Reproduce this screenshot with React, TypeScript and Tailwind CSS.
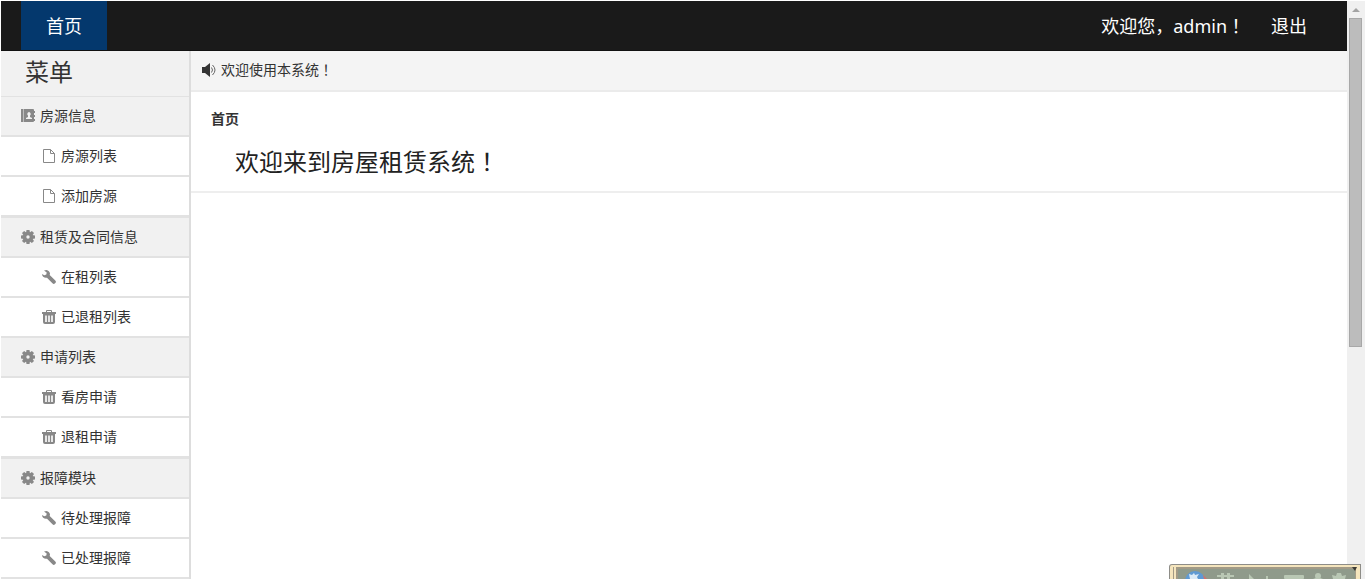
import React from 'react';

type IconName = 'book' | 'file' | 'gear' | 'wrench' | 'trash';

interface MenuItem {
    label: string;
    icon: IconName;
}

interface MenuGroup extends MenuItem {
    children: MenuItem[];
}

const MENU: MenuGroup[] = [
    {
        label: '房源信息',
        icon: 'book',
        children: [
            { label: '房源列表', icon: 'file' },
            { label: '添加房源', icon: 'file' }
        ]
    },
    {
        label: '租赁及合同信息',
        icon: 'gear',
        children: [
            { label: '在租列表', icon: 'wrench' },
            { label: '已退租列表', icon: 'trash' }
        ]
    },
    {
        label: '申请列表',
        icon: 'gear',
        children: [
            { label: '看房申请', icon: 'trash' },
            { label: '退租申请', icon: 'trash' }
        ]
    },
    {
        label: '报障模块',
        icon: 'gear',
        children: [
            { label: '待处理报障', icon: 'wrench' },
            { label: '已处理报障', icon: 'wrench' }
        ]
    }
];

const TEETH = [0, 45, 90, 135, 180, 225, 270, 315];

const Icon: React.FC<{ name: IconName }> = ({ name }) => (
    <svg viewBox="0 0 14 14" className="w-[14px] h-[14px] shrink-0 text-[#888]" fill="currentColor" aria-hidden="true">
        {name === 'book' && (
            <>
                <path d="M0 0h2v13H0zM2 0h.5v13H2zM3 0h9q1 0 1 1v11q0 1-1 1H3z" />
                <path d="M13 2h1v2h-1zM13 6h1v2h-1zM13 10h1v2h-1z" />
                <path fill="#f1f1f1" d="M8 3a2 2 0 0 1 1 3.5V8l2 1v1H5V9l2-1V6.5A2 2 0 0 1 8 3z" />
            </>
        )}
        {name === 'file' && (
            <path fill="none" stroke="currentColor" d="M1.5.5h7l4 4v9h-11zM8.5.5v4h4" />
        )}
        {name === 'gear' && (
            <>
                {TEETH.map((angle) => (
                    <path key={angle} d="M5.5 0h3l.5 3H5z" transform={`rotate(${angle} 7 7)`} />
                ))}
                <path fillRule="evenodd" d="M7 2a5 5 0 1 1 0 10A5 5 0 0 1 7 2zm0 3.3a1.7 1.7 0 1 0 0 3.4 1.7 1.7 0 0 0 0-3.4z" />
            </>
        )}
        {name === 'wrench' && (
            <path d="M2 .5 4.5 0Q7.5.5 8 3.5L7.7 5l5.6 5.5q1.2 1.2.2 2.3l-.7.7q-1.2 1-2.3-.2L5 7.7Q3 8.3 1.2 6.8.2 6 0 4l2.3 1.200L4.300 4.500 4.700 2.500z" />
        )}
        {name === 'trash' && (
            <>
                <path fillRule="evenodd" d="M0 4V2h4V1q0-1 1-1h4q1 0 1 1v1h4v2zM5 2h4V1H5z" />
                <path fillRule="evenodd" d="M1 4h12v8q0 2-2 2H3q-2 0-2-2zM3.200 5.500V12h1.600V5.500zm3 0V12h1.600V5.500zm3 0V12h1.600V5.500z" />
            </>
        )}
    </svg>
);

const Speaker = () => (
    <svg viewBox="0 0 14 14" className="w-[14px] h-[14px] shrink-0" aria-hidden="true">
        <path fill="#333" d="M0 4h3l5-4v14l-5-4H0z" />
        <path fill="none" stroke="#666" d="M9.5 4.5q2 2.500 0 5M10.500 2q5 5 0 10" />
    </svg>
);

// Full-width exclamation mark centred in its cell
const Bang = () => <span className="font-['Noto_Sans_CJK_TC',sans-serif] leading-none">！</span>;

const Header = () => (
    <header className="h-[50px] bg-[#1a1a1a] border-b border-[#111] flex justify-between text-lg text-white">
        <nav className="pl-5 flex">
            <a href="#" className="px-[25px] flex items-center bg-[#04386d]">首页</a>
        </nav>
        <div className="pr-10 flex items-center gap-[26px]">
            <span>欢迎您，admin<Bang /></span>
            <a href="#">退出</a>
        </div>
    </header>
);

const Sidebar = () => (
    <aside className="w-[190px] shrink-0 border-r-2 border-[#ddd]">
        <h2 className="h-[46px] pl-6 pb-1 flex items-center text-2xl bg-[#f1f1f1] border-b border-[#e2e2e2]">菜单</h2>
        <nav>
            {MENU.map((group) => (
                <section key={group.label} className="border-[#e2e2e2] odd:border-b">
                    <a href="#" className="h-10 pl-5 flex items-center gap-[5px] bg-[#f1f1f1] border-b-2 border-[#e2e2e2]">
                        <Icon name={group.icon} />
                        {group.label}
                    </a>
                    <ul>
                        {group.children.map((item) => (
                            <li key={item.label}>
                                <a href="#" className="h-10 pl-[41px] flex items-center gap-[5px] border-b-2 border-[#e2e2e2]">
                                    <Icon name={item.icon} />
                                    {item.label}
                                </a>
                            </li>
                        ))}
                    </ul>
                </section>
            ))}
        </nav>
    </aside>
);

const ScrollTrack = () => (
    <div className="w-[18px] shrink-0 px-[2px] bg-[#f0f0f0] flex flex-col" aria-hidden="true">
        <svg viewBox="0 0 14 17" className="w-[14px] h-[17px]">
            <path fill="#a3a3a3" d="M3 11 7 7l4 4z" />
        </svg>
        <div className="h-[57%] w-[13px] bg-[#bcbcbc] border border-[#a8a8a8]" />
    </div>
);

// Input method bar docked at the bottom edge of the desktop
const ImeBar = () => (
    <svg viewBox="0 0 192 15" className="absolute bottom-0 right-[4px] w-[192px] h-[15px]" aria-hidden="true">
        <path fill="#8e8d88" d="M0 15V3Q0 0 3 0h189v15z" />
        <path fill="#f5e5bd" d="M1 15V3q0-2 2-2h188v14z" />
        <path fill="#a29a86" d="M4 3h1v12H4zM7 3h180v12H7z" />
        <path fill="#8f9a8b" d="M9 5h177v10H9z" />
        <path fill="#3a3a34" d="M183 3h5l-2 4z" />
        <circle cx="26" cy="17" r="10" fill="#5f9ad3" />
        <path fill="#dcebf7" d="m20 10 3 1 2-2 1 2 4-1-2 3 1 2h-8z" />
        <path fill="#d4706d" d="m34 11 4 4h-3z" />
        <g fill="#b9c7b4">
            <path d="M48 11h4V9h3v2h3V9h3v2h4v2h-4v2h-3v-2h-3v2h-3v-2h-4z" />
            <path d="m80 10 5 5h-5zM97 12h2v3h-2z" />
            <rect x="115" y="11" width="20" height="4" rx="1" />
            <circle cx="149" cy="12" r="3" />
            <path d="M144 15q5-3 10 0zM163 11l4 1 1-3h4l1 3 4-1-1 4h-12z" />
        </g>
    </svg>
);

export default function App() {
    return (
        <div className="relative h-screen overflow-hidden flex bg-white pt-px pl-px text-sm text-[#333] font-['Noto_Sans','Noto_Sans_CJK_SC',sans-serif]">
            <div className="flex-1 min-w-0 flex flex-col">
                <Header />
                <div className="flex-1 min-h-0 flex">
                    <Sidebar />
                    <main className="flex-1 min-w-0">
                        <div className="h-[41px] pl-[11px] pb-px flex items-center gap-[5px] bg-[#f4f4f4] border-b-2 border-[#ebebeb]">
                            <Speaker />
                            <p>欢迎使用本系统<Bang /></p>
                        </div>
                        <div className="h-[101px] pt-[17px] pl-5 border-b-2 border-[#eee]">
                            <strong className="block leading-5">首页</strong>
                            <h1 className="mt-[17px] pl-6 text-2xl text-[#222]">欢迎来到房屋租赁系统<Bang /></h1>
                        </div>
                    </main>
                </div>
            </div>
            <ScrollTrack />
            <ImeBar />
        </div>
    );
}
